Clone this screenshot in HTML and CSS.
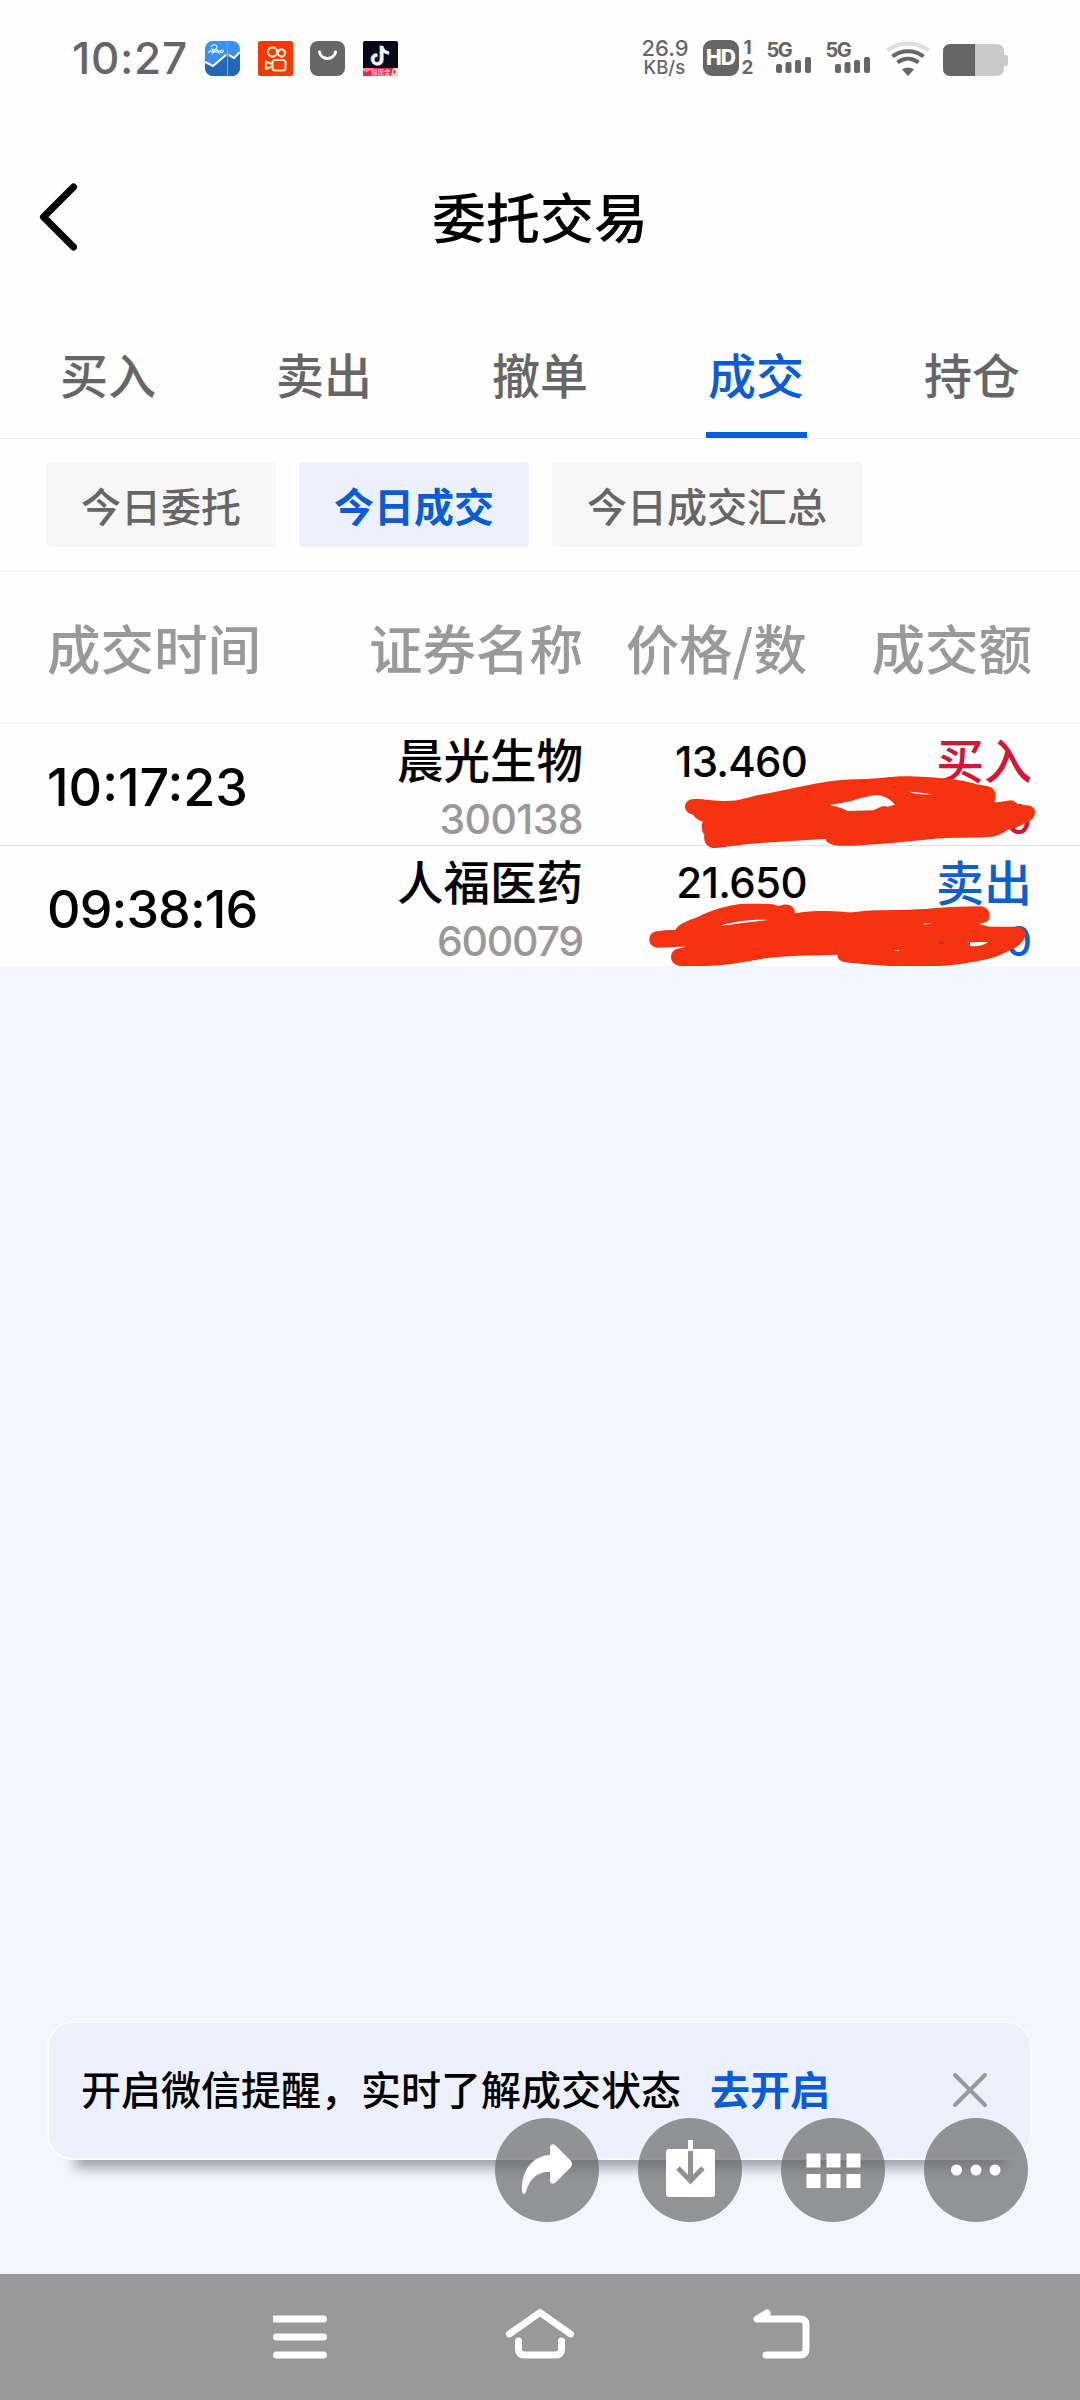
FILE: index.html
```html
<!DOCTYPE html>
<html lang="zh-CN">
<head>
    <meta charset="UTF-8">
    <meta name="viewport" content="width=device-width, initial-scale=1.0">
    <title>委托交易</title>
    <link rel="stylesheet" href="styles.css">
</head>
<body>
    <div class="status-bar">
        <span class="clock">10:27</span>
        <div class="apps">
            <svg width="35" height="35" viewBox="0 0 35 35">
                <defs><clipPath id="r1"><rect width="35" height="35" rx="8"/></clipPath></defs>
                <g clip-path="url(#r1)">
                    <rect width="35" height="35" fill="#3b8ff0"/>
                    <path d="M0 21L8 25L22 13L29 17L35 11V35H0z" fill="#2367b8"/>
                    <path d="M0 21L8 25L22 13L29 17L35 11" fill="none" stroke="#fff" stroke-width="2"/>
                    <path d="M22.5 0V35" stroke="#6fa9ec" stroke-width="1"/>
                    <path d="M3 12L6 9M6 6C7 3 12 3 12 6S8 10 6 7M6 12L8 9V12L10 9V12M12 12V9L14 12V9M18 9C14 9 15 13 18 11V9" fill="none" stroke="#dff0ff" stroke-width="1.2"/>
                    <circle cx="22.5" cy="13.5" r="2" fill="#c69a68"/>
                </g>
            </svg>
            <svg width="35" height="35" viewBox="0 0 35 35">
                <rect width="35" height="35" rx="2.5" fill="#f43a04"/>
                <g fill="none" stroke="#ffe3c0" stroke-width="2.2" stroke-linejoin="round">
                    <circle cx="14.5" cy="11" r="4.6"/>
                    <circle cx="23.5" cy="12" r="3.6"/>
                    <rect x="14.5" y="19" width="13" height="10.5" rx="2.5"/>
                    <path d="M14 23L8 20.5V28L14 25.5"/>
                </g>
            </svg>
            <svg width="35" height="35" viewBox="0 0 35 35">
                <rect width="35" height="35" rx="8" fill="#666"/>
                <path d="M9.5 11C11 19.500 24 19.500 25.500 11" fill="none" stroke="#fff" stroke-width="3" stroke-linecap="round"/>
            </svg>
            <svg width="35" height="35" viewBox="0 0 35 35">
                <defs><clipPath id="r2"><rect width="35" height="35" rx="2"/></clipPath></defs>
                <g clip-path="url(#r2)">
                    <rect width="35" height="35" fill="#06091a"/>
                    <g fill="none" stroke-width="3">
                        <path d="M18 4.500V18A4.500 4.500 0 1 1 13.500 13.500M18 5C19 9 21 11 25.500 11.500" stroke="#25e6e0"/>
                        <path d="M19.500 5.500V19A4.500 4.500 0 1 1 15 14.500M19.500 6C20 10 22 12 26.500 12.500" stroke="#fb2b58"/>
                        <path d="M18.800 5V18.500A4.500 4.500 0 1 1 14.200 14M18.800 5.500C19.500 9.500 21.500 11.500 26 12" stroke="#fff"/>
                    </g>
                    <path d="M0 27H35V35H0z" fill="#e5284f"/>
                    <path d="M0 27L12 27L4 31L0 30z" fill="#fa8c91"/>
                    <path d="M28 35L30 27H35V35z" fill="#ffe1cf"/>
                    <path d="M31.500 29V33M30 31H33" stroke="#c23" stroke-width="1"/>
                    <text x="8" y="33.5" class="ribbon">领现金</text>
                </g>
            </svg>
        </div>
        <div class="net-speed">
            <span class="speed">26.9</span>
            <span class="unit">KB/s</span>
        </div>
        <div class="hd">
            <span class="hd-box">HD</span>
            <span class="sims"><i>1</i><i>2</i></span>
        </div>
        <div class="signal">
            <span>5G</span>
            <svg width="36" height="16" viewBox="0 0 36 16" fill="#666">
                <rect x="0" y="7" width="6" height="9" rx="2"/>
                <rect x="9.500" y="5" width="6" height="11" rx="2"/>
                <rect x="19" y="3" width="6" height="13" rx="2"/>
                <rect x="29" y="0" width="6" height="16" rx="2"/>
            </svg>
        </div>
        <div class="signal second">
            <span>5G</span>
            <svg width="36" height="16" viewBox="0 0 36 16" fill="#666">
                <rect x="0" y="7" width="6" height="9" rx="2"/>
                <rect x="9.500" y="5" width="6" height="11" rx="2"/>
                <rect x="19" y="3" width="6" height="13" rx="2"/>
                <rect x="29" y="0" width="6" height="16" rx="2"/>
            </svg>
        </div>
        <svg class="wifi" width="44" height="35" viewBox="0 0 44 35">
            <g fill="none" stroke-width="4">
                <path d="M1.500 9.500C13 0 31 0 42.500 9.500" stroke="#dedede"/>
                <path d="M6.500 15.500C15 8.500 29 8.500 37.500 15.500" stroke="#666"/>
                <path d="M11.500 21.500C18 16.500 26 16.500 32.500 21.500" stroke="#666"/>
            </g>
            <path d="M16 28.500C19.500 25.700 24.500 25.700 28 28.500L22 35z" fill="#666"/>
        </svg>
        <svg class="battery" width="65" height="32" viewBox="0 0 65 32">
            <path d="M8 0H53Q61 0 61 8V11H63Q65 11 65 13V20Q65 22 63 22H61V24Q61 32 53 32H8Q0 32 0 24V8Q0 0 8 0z" fill="#cacaca"/>
            <path d="M8 0H32V32H8Q0 32 0 24V8Q0 0 8 0z" fill="#666"/>
        </svg>
    </div>

    <header class="title-bar">
        <svg class="back" width="40" height="70" viewBox="0 0 40 70">
            <path d="M35.500 4L5.500 34L35.500 64" fill="none" stroke="#000" stroke-width="7" stroke-linecap="round" stroke-linejoin="round"/>
        </svg>
        <h1>委托交易</h1>
    </header>

    <nav class="tabs">
        <a>买入</a>
        <a>卖出</a>
        <a>撤单</a>
        <a class="active">成交</a>
        <a>持仓</a>
    </nav>

    <div class="chips">
        <span class="chip">今日委托</span>
        <span class="chip active">今日成交</span>
        <span class="chip">今日成交汇总</span>
    </div>

    <section class="deals">
        <div class="row head">
            <span>成交时间</span>
            <span>证券名称</span>
            <span>价格/数</span>
            <span>成交额</span>
        </div>
        <div class="row">
            <span class="time">10:17:23</span>
            <div><p class="name">晨光生物</p><p class="code">300138</p></div>
            <div><p class="price">13.460</p></div>
            <div class="buy"><p class="side">买入</p><p class="amount">0</p></div>
        </div>
        <div class="row last">
            <span class="time">09:38:16</span>
            <div><p class="name">人福医药</p><p class="code">600079</p></div>
            <div><p class="price">21.650</p></div>
            <div class="sell"><p class="side">卖出</p><p class="amount">0</p></div>
        </div>
        <!-- hand drawn strokes over the quantities -->
        <svg class="scribble" width="420" height="250" viewBox="0 0 1260 750">
            <g fill="#f53311">
                <path fill-rule="evenodd" d="M160 207C190 206 220 213 260 213C300 213 320 202 355 195C440 183 530 152 640 148C720 147 750 138 810 139C900 143 950 147 1000 160C1020 168 1045 164 1060 177C1070 190 1068 205 1062 215C1080 220 1095 212 1112 211C1125 212 1130 222 1140 226C1160 226 1175 225 1183 238C1190 256 1176 272 1160 277C1140 286 1130 296 1110 298C1090 304 1085 317 1055 320C1000 325 930 320 870 328C790 337 700 344 640 347C610 347 590 349 574 343C562 338 558 334 557 327C450 333 370 337 300 345C265 348 240 354 218 354C198 350 190 334 193 314C185 306 183 288 188 275C174 270 164 263 160 254C143 250 135 240 135 230C136 216 146 208 160 207zM568 224C600 233 608 234 622 243L700 241C720 232 725 226 742 230L764 224C755 210 735 198 712 195C675 196 640 217 568 224zM806 185C830 195 858 192 880 194C855 187 830 188 806 185z"/>
                <path fill-rule="evenodd" d="M50 604C75 600 90 600 106 600C115 580 145 572 175 560C220 538 265 526 300 522C340 521 370 521 400 523C410 528 420 529 427 525C445 520 465 530 465 550C510 542 560 542 610 545C630 551 650 544 680 542C750 540 820 541 880 535C930 530 980 530 1025 529C1047 534 1055 555 1045 570C1038 578 1024 580 1018 582C1030 586 1040 588 1050 590L1130 590C1152 590 1160 606 1155 620C1148 640 1125 656 1105 663C1075 680 1040 690 1000 695C930 710 850 711 780 710C720 708 670 702 615 697C597 692 592 684 592 674C510 675 430 678 380 684C310 698 240 708 195 708H122C103 706 93 694 93 680C95 664 104 657 120 655L138 650C105 650 75 652 50 653C35 650 27 640 28 628C29 614 37 606 50 604zM240 587C290 582 340 575 386 570C340 568 290 572 240 587zM982 637L990 648C1010 650 1030 647 1044 637C1025 634 1000 638 982 637zM848 583C860 578 870 580 880 580C866 581 860 585 848 583zM764 662C770 659 776 660 780 662C776 664 770 663 764 662z"/>
            </g>
            <path d="M896 641L900 637H914L910 641z" fill="#3b4fae"/>
            <path d="M982 637L990 648V637z" fill="#1767cf"/>
        </svg>
    </section>

    <main class="blank">
        <div class="notice">
            <span class="notice-text">开启微信提醒，实时了解成交状态</span>
            <a class="notice-link">去开启</a>
            <svg class="close" width="36" height="36" viewBox="0 0 36 36">
                <path d="M3 3L33 33M33 3L3 33" stroke="#999" stroke-width="4" stroke-linecap="round"/>
            </svg>
        </div>
        <div class="float-actions">
            <svg width="104" height="104" viewBox="0 0 104 104">
                <circle cx="52" cy="52" r="52"/>
                <path d="M55 28Q57 25 60 27L76 43Q78 46 76 49L60 65Q57 67 55 64V54C43 53 34 61 31 74Q29 78 27 74C26 53 37 38 55 37z" fill="#fff"/>
            </svg>
            <svg width="104" height="104" viewBox="0 0 104 104">
                <circle cx="52" cy="52" r="52"/>
                <path d="M31 31H50V22H55V31H74Q77 31 77 34V76Q77 79 74 79H31Q28 79 28 76V34Q28 31 31 31z" fill="#fff"/>
                <path d="M52.500 33V62M40 50L52.500 63L65 50" fill="none" stroke="#909196" stroke-width="5"/>
            </svg>
            <svg width="104" height="104" viewBox="0 0 104 104">
                <circle cx="52" cy="52" r="52"/>
                <path d="M25.500 35.500h14v14h-14zM45.500 35.500h14v14h-14zM65.500 35.500h14v14h-14zM25.500 56h14v14h-14zM45.500 56h14v14h-14zM65.500 56h14v14h-14z" fill="#fff"/>
            </svg>
            <svg width="104" height="104" viewBox="0 0 104 104">
                <circle cx="52" cy="52" r="52"/>
                <path d="M32.500 52h.01M52 52h.01M71 52h.01" stroke="#fff" stroke-width="11" stroke-linecap="round"/>
            </svg>
        </div>
    </main>

    <footer class="sys-nav">
        <svg width="54" height="50" viewBox="0 0 54 50">
            <path d="M-1 10H0" stroke="none"/>
            <path d="M3.500 10H50.500M3.500 28H50.500M3.500 46H50.500"/>
        </svg>
        <svg width="70" height="54" viewBox="0 0 70 54">
            <path d="M4.500 25L35 3.500L65.500 25M13.500 32V40Q13.500 46 19.500 46H50.500Q56.500 46 56.500 40V32"/>
        </svg>
        <svg width="60" height="54" viewBox="0 0 60 54">
            <path d="M14 4L4 10H47Q53 10 53 16V40Q53 46 47 46H13M4 10L13 7"/>
        </svg>
    </footer>
</body>
</html>
```
FILE: styles.css
```css
* {
    box-sizing: border-box;
}

body {
    margin: 0;
    width: 1080px;
    height: 2400px;
    overflow: hidden;
    display: flex;
    flex-direction: column;
    background: #fefefe;
    color: #000;
    font-family: Inter, "Noto Sans CJK SC", sans-serif;
    font-weight: 500;
}

h1, p {
    margin: 0;
}

svg {
    display: block;
    flex: none;
}

/* status bar */
.status-bar {
    height: 116px;
    padding: 0 72px 0 72px;
    display: flex;
    align-items: center;
    color: #666;
}

.clock {
    width: 133px;
    font-size: 44px;
    letter-spacing: 0.7px;
}

.apps {
    display: flex;
    gap: 17.5px;
    margin-right: 244px;
}

.ribbon {
    font-size: 6.5px;
    fill: #ffd9d9;
}

.net-speed {
    width: 61px;
    display: flex;
    flex-direction: column;
    line-height: 19px;
}

.speed {
    font-size: 22px;
}

.unit {
    font-size: 18.5px;
    padding-left: 2px;
}

.hd {
    width: 64px;
    display: flex;
    gap: 3px;
}

.hd-box {
    width: 36px;
    height: 36px;
    border-radius: 9px;
    background: #666;
    color: #fff;
    font-size: 21px;
    font-weight: 800;
    line-height: 36px;
    text-align: center;
    letter-spacing: -1px;
}

.sims {
    display: flex;
    flex-direction: column;
    font-size: 19px;
    font-weight: 700;
    line-height: 20px;
    margin: -2px 0;
    text-align: center;
}

.sims i {
    font-style: normal;
}

.signal {
    width: 59px;
    font-size: 20px;
    font-weight: 700;
    line-height: 15px;
    letter-spacing: -1.5px;
}

.signal svg {
    margin: -1px 0 0 9px;
}

.signal.second {
    width: 60px;
}

.wifi {
    margin-right: 13px;
}

.battery {
    margin-top: 3px;
}

/* page title */
.title-bar {
    height: 204px;
    padding: 0 38px;
    display: grid;
    grid-template-columns: 80px 1fr 80px;
    align-items: center;
}

.title-bar h1 {
    padding-bottom: 6px;
    font-size: 54px;
    font-weight: 500;
    text-align: center;
}

/* tabs */
.tabs {
    height: 119px;
    display: grid;
    grid-template-columns: repeat(5, 1fr);
    justify-items: center;
    border-bottom: 1px solid #eee;
}

.tabs a {
    width: 101px;
    height: 118px;
    font-size: 48px;
    line-height: 114px;
    color: #666;
    text-align: center;
    border-bottom: 6px solid transparent;
}

.tabs a.active {
    color: #095cd5;
    border-color: #095cd5;
}

/* filter chips */
.chips {
    height: 133px;
    padding: 0 46px;
    display: flex;
    align-items: center;
    gap: 23px;
    border-bottom: 2px solid #f2f2f2;
}

.chip {
    height: 85px;
    padding: 0 35px;
    line-height: 91px;
    font-size: 40px;
    color: #666;
    background: #f7f7f7;
    border-radius: 4px;
}

.chip.active {
    color: #095cd5;
    background: #edf1fe;
    font-weight: 700;
}

/* deal list */
.deals {
    position: relative;
    height: 394px;
}

.row {
    height: 122px;
    padding: 0 48px;
    display: grid;
    grid-template-columns: 292px 243px 224px 225px;
    border-bottom: 1px solid #e2e2e2;
    text-align: right;
}

.row.head {
    height: 152px;
    padding-left: 47px;
    grid-template-columns: 293px 243px 224px 225px;
    line-height: 150px;
    font-family: "Noto Sans CJK SC", sans-serif;
    font-size: 53.5px;
    color: #999;
    border-bottom: 2px solid #f2f2f2;
}

.row > :first-child {
    text-align: left;
}

.row.last {
    height: 120px;
    border-bottom: none;
}

.time {
    font-size: 52px;
    line-height: 128px;
    margin-left: -1px;
}

.last .time {
    letter-spacing: -0.9px;
}

.name {
    font-size: 46.5px;
    line-height: 75px;
}

.code {
    font-size: 41px;
    line-height: 40px;
    letter-spacing: -0.6px;
    color: #999;
}

.last .code {
    letter-spacing: -1.2px;
}

.price {
    font-size: 42px;
    line-height: 75px;
    letter-spacing: -0.8px;
}

.last .price {
    line-height: 74px;
    padding-bottom: 1px;
    letter-spacing: -0.6px;
}

.side {
    font-size: 48px;
    line-height: 75px;
}

.amount {
    font-size: 41px;
    line-height: 40px;
}

.buy {
    color: #d31638;
}

.sell {
    color: #0b5fd0;
}

.scribble {
    position: absolute;
    left: 640px;
    top: 158px;
}

/* blank area with the notice */
.blank {
    position: relative;
    flex: 1;
    padding: 0 48px 114px 47px;
    display: flex;
    flex-direction: column;
    justify-content: flex-end;
    background: #f1f6ff;
}

.notice {
    height: 139px;
    padding: 0 42px 6px 32px;
    display: flex;
    align-items: center;
    background: #edf1fd;
    border: 2px solid #fafcff;
    border-radius: 26px;
    box-shadow: 0 36px 12px -28px rgba(0, 0, 0, 0.35);
    font-size: 40px;
}

.notice-link {
    margin-left: 29px;
    color: #095cd5;
    font-weight: 700;
}

.close {
    margin: 4px 0 0 auto;
}

.float-actions {
    position: absolute;
    right: 52px;
    bottom: 52px;
    display: flex;
    gap: 39px;
}

.float-actions circle {
    fill: rgba(100, 100, 100, 0.68);
}

/* system navigation */
.sys-nav {
    height: 126px;
    padding: 35px 0 0 6px;
    display: flex;
    justify-content: center;
    align-items: flex-start;
    gap: 178px;
    background: #999;
}

.sys-nav path {
    fill: none;
    stroke: #fff;
    stroke-width: 7;
    stroke-linecap: round;
    stroke-linejoin: round;
}
```
